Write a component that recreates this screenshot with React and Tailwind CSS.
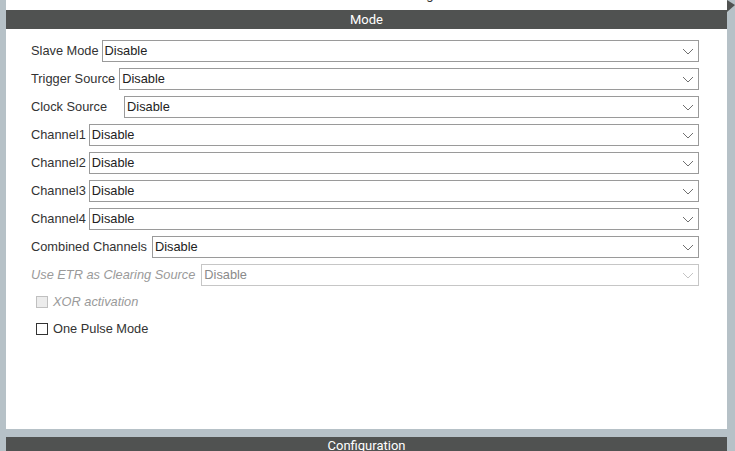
import React from "react";

const rows = [
  { label: "Slave Mode", gap: "ml-[3px]" },
  { label: "Trigger Source", gap: "ml-[4px]" },
  { label: "Clock Source", gap: "ml-[17px]" },
  { label: "Channel1", gap: "ml-[3px]" },
  { label: "Channel2", gap: "ml-[3px]" },
  { label: "Channel3", gap: "ml-[3px]" },
  { label: "Channel4", gap: "ml-[3px]" },
  { label: "Combined Channels", gap: "ml-[5px]" },
];

function Chevron({ disabled }) {
  return (
    <svg width="12" height="7" viewBox="0 0 12 7" className="shrink-0">
      <polyline
        points="1,1 6,6 11,1"
        fill="none"
        stroke={disabled ? "#c4c4c4" : "#707070"}
        strokeWidth="1"
      />
    </svg>
  );
}

function Select({ disabled }) {
  return (
    <div
      className={
        "flex-1 h-[22px] flex items-center justify-between pl-[2px] pr-[4px] border bg-white " +
        (disabled ? "border-[#c6c6c6] text-[#8a8a8a]" : "border-[#9a9a9a] text-[#222]")
      }
    >
      <span>Disable</span>
      <Chevron disabled={disabled} />
    </div>
  );
}

export default function App() {
  return (
    <div
      className="flex w-[735px] h-[451px] overflow-hidden bg-[#b6c1c7]"
      style={{ fontFamily: "'Liberation Sans', Arial, sans-serif" }}
    >
      <div className="w-[6px] shrink-0 bg-[#b6c1c7]" />
      <div className="flex flex-col w-[721px] shrink-0">
        <div className="h-[10px] bg-white overflow-hidden flex justify-center">
          <div
            className="text-[13px] leading-[16px] mt-[-13px] text-[#333] pl-[76px]"
            style={{ fontFamily: "Roboto, sans-serif" }}
          >
            Mode and Configuration
          </div>
        </div>
        <div
          className="h-[19px] bg-[#505251] text-white text-[13px] flex items-center justify-center"
          style={{ fontFamily: "Roboto, sans-serif" }}
        >
          Mode
        </div>
        <div className="h-[400px] bg-white pl-[25px] pr-[28px] pt-[10px] text-[12.8px]">
          <div className="flex flex-col gap-[6px] pt-[1px]">
            {rows.map((r) => (
              <div key={r.label} className="flex items-center h-[22px]">
                <span className="text-[#333] whitespace-nowrap">{r.label}</span>
                <div className={"flex flex-1 " + r.gap}>
                  <Select />
                </div>
              </div>
            ))}
            <div className="flex items-center h-[22px]">
              <span className="text-[#9a9a9a] italic whitespace-nowrap">
                Use ETR as Clearing Source
              </span>
              <div className="flex flex-1 ml-[6px]">
                <Select disabled />
              </div>
            </div>
          </div>
          <div className="flex items-center h-[14px] mt-[9px] pl-[5px]">
            <div className="w-[12px] h-[12px] border border-[#c0c0c0] bg-[#ececec]" />
            <span className="ml-[5px] italic text-[#9a9a9a]">XOR activation</span>
          </div>
          <div className="flex items-center h-[14px] mt-[13px] pl-[5px]">
            <div className="w-[12px] h-[12px] border border-[#333] bg-white" />
            <span className="ml-[5px] text-[#333]">One Pulse Mode</span>
          </div>
        </div>
        <div className="h-[8px] bg-[#b6c1c7]" />
        <div
          className="h-[14px] bg-[#505251] text-white text-[13px] flex justify-center overflow-hidden"
          style={{ fontFamily: "Roboto, sans-serif" }}
        >
          <span className="leading-[18px]">Configuration</span>
        </div>
      </div>
      <div className="w-[8px] shrink-0 bg-[#b6c1c7]">
        <svg width="8" height="14" viewBox="0 0 8 14">
          <polygon points="0,0 8,5 0,12" fill="#505251" />
        </svg>
      </div>
    </div>
  );
}
